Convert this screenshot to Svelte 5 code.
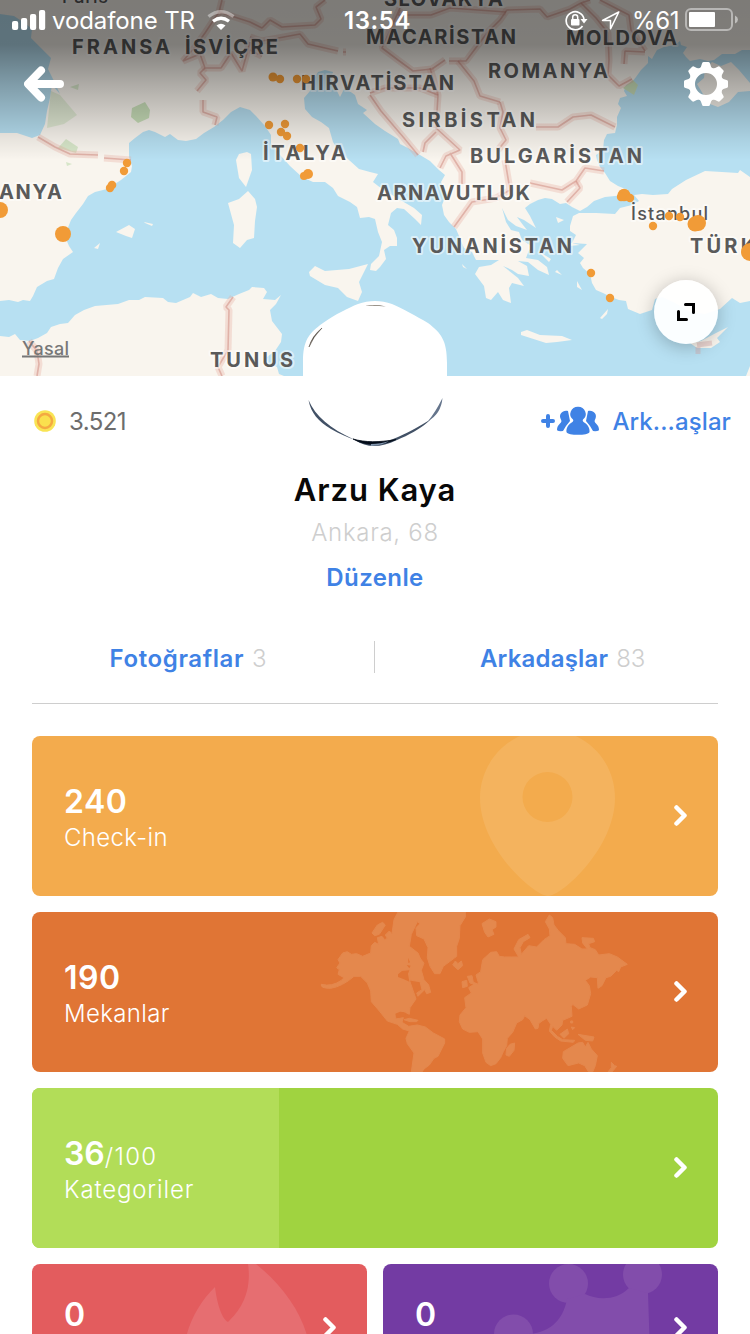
<script>
  const labels = [
    { t: 'Paris', x: 62, y: 3, w: 46, s: 18, k: 'city' },
    { t: 'SLOVAKYA', x: 384, y: 6, w: 119 },
    { t: 'FRANSA', x: 72, y: 54, w: 98 },
    { t: 'İSVİÇRE', x: 185, y: 54, w: 93 },
    { t: 'MACARİSTAN', x: 366, y: 44, w: 150 },
    { t: 'MOLDOVA', x: 566, y: 45, w: 111 },
    { t: 'ROMANYA', x: 488, y: 78, w: 120 },
    { t: 'HIRVATİSTAN', x: 301, y: 90, w: 153 },
    { t: 'SIRBİSTAN', x: 402, y: 127, w: 133 },
    { t: 'İTALYA', x: 263, y: 160, w: 83 },
    { t: 'BULGARİSTAN', x: 470, y: 163, w: 172 },
    { t: 'ANYA', x: -1, y: 199, w: 63 },
    { t: 'ARNAVUTLUK', x: 377, y: 200, w: 153 },
    { t: 'YUNANİSTAN', x: 412, y: 253, w: 160 },
    { t: 'TÜRKİYE', x: 690, y: 253, w: 107 },
    { t: 'TUNUS', x: 210, y: 367, w: 83 },
    { t: 'İstanbul', x: 631, y: 220, w: 77, s: 18, k: 'city' }
  ];
  const dots = [
    [273, 77, 4.5], [280, 79, 4.2], [297, 79, 4.2], [306, 79, 4.2], [269, 125, 4.2], [285, 124, 4.2],
    [281, 132, 4.2], [287, 136, 4.2], [300, 148, 4.2], [308, 174, 5], [304, 176, 4], [127, 163, 4.2],
    [124, 171, 4.2], [112, 185, 4.3], [110, 188, 4.2], [0, 210, 8], [63, 234, 8], [624, 195, 6.3],
    [621, 197, 4.2], [630, 198, 4.2], [669, 216, 4.2], [680, 217, 4.2], [653, 226, 4.2], [698, 223, 8],
    [695, 224, 7.5], [591, 273, 4.2], [610, 298, 4.2], [750, 252, 9]
  ];
  const borders = [
    'M38 137L55 147 70 154 98 155M104 158L131 160',
    'M222 0L219 12 205 33 195 47 183 61 200 54 205 68 221 68 231 53 242 71 250 42',
    'M219 12L250 22 262 28 270 20 282 27 315 25 321 19 316 7 325 0',
    'M205 68L200 73 206 80 197 91M203 100V112L217 117 215 125',
    'M250 37L262 41 300 34 308 44 338 51M343 52H346M262 56L250 50',
    'M400 10L398 15 431 15 450 8 506 12M400 8L382 48 398 60 413 71 432 69 445 60',
    'M449 61H466L487 33 500 20 507 10 540 9 547 17 570 9 581 3 590 0',
    'M581 3L596 18 608 33 609 60 608 75 619 86 632 79M600 0L629 15 631 30 645 51M624 64L625 51 645 52',
    'M458 61L474 81 480 96 500 102M430 68L438 95 436 128',
    'M500 102L503 112 500 128 506 140 498 150',
    'M370 95L381 111 404 138 418 155M370 93L385 88 420 88 438 95',
    'M436 128L460 150 446 156 440 168M436 132L425 143 423 152M450 153L462 172V184',
    'M536 127H558L573 117 591 115 615 127M604 171L585 168 576 181 562 190 530 183',
    'M505 160L510 190 496 198 472 202 454 227M576 181L580 188 567 202',
    'M233 297L226 307 229 310 228 350 218 367 222 376',
    'M29 341L37 351 39 364 37 376'
  ];
  const stats = [
    { n: '240', label: 'Check-in', k: 'checkin' },
    { n: '190', label: 'Mekanlar', k: 'places' },
    { n: '36', of: '/100', label: 'Kategoriler', k: 'categories' }
  ];
</script>

<main>
  <header class="map">
    <svg class="geo" viewBox="0 0 750 376" width="750" height="376">
      <defs>
        <linearGradient id="shade" x1="0" y1="0" x2="0" y2="1">
          <stop offset="0" stop-color="#000" stop-opacity=".5" />
          <stop offset=".28" stop-color="#000" stop-opacity=".49" />
          <stop offset=".53" stop-color="#000" stop-opacity=".3" />
          <stop offset=".87" stop-color="#000" stop-opacity=".07" />
          <stop offset="1" stop-color="#000" stop-opacity="0" />
        </linearGradient>
      </defs>
      <rect width="750" height="376" fill="#b7e0f2" />
      <g fill="#f9f5ee">
        <path d="M0 0H750V50L742 50 735 54 722 54 714 60 708 61 700 59 690 61 686 57 683 53 687 47 681 45 680 41 675 45 664 47 657 50 653 57 652 59 648 56 648 63 641 70 636 77 632 82 626 85 624 91 627 96 620 98 618 104 621 108 617 117 617 125 615 133 607 134 604 140 603 150 596 155 597 160 600 167 605 173 610 181 618 186 628 190 623 195 615 196 605 197 594 201 587 207 580 211 572 207 566 203 560 204 552 199 545 198 538 200 530 204 525 208 530 216 536 228 530 224 524 220 517 217 523 225 527 230 516 226 508 220 502 208 506 222 511 230 519 232 522 240 533 247 529 250 526 258 538 260 547 267 549 275 538 270 528 262 518 261 527 266 529 276 518 274 512 270 503 266 518 278 524 286 512 283 509 288 511 303 503 300 498 292 491 300 486 298 484 286 475 274 479 267 491 265 499 260 476 260 472 252 464 248 459 236 456 229 449 222 444 215 442 205 446 195 441 182 445 175 439 170 430 161 420 155 408 148 400 144 398 139 385 131 375 124 363 113 367 110 358 104 355 95 348 90 345 87 340 97 337 91 331 79 333 72 325 70 318 72 313 80 310 91 304 98 305 109 312 117 321 122 329 128 333 142 338 150 349 160 359 169 370 172 378 174 373 182 382 189 402 201 414 208 422 215 421 225 415 219 404 209 397 208 391 213 388 225 394 230 397 238 397 246 390 246 384 250 386 259 380 267 376 271 370 270 371 264 379 256 382 242 378 232 375 219 369 217 360 218 357 207 350 202 338 196 333 188 325 182 313 182 302 177 290 166 281 156 271 144 271 135 265 126 256 116 250 110 240 107 231 112 223 120 214 127 204 133 196 139 186 141 178 140 170 134 165 137 155 132 149 130 143 132 135 138 129 143 129 157 132 166 131 172 121 180 107 189 95 192 88 196 83 204 76 213 71 220 67 230 66 239 69 246 73 252 63 259 58 268 54 279 47 281 37 287 33 296 30 301 23 300 18 302 9 300 0 301Z" />
        <path d="M0 336L9 337 15 334 20 340 30 341 38 338 47 333 51 327 60 324 68 323 75 315 84 310 95 306 118 304 129 300 139 300 145 297 163 298 168 302 176 303 190 297 193 293 201 297 211 294 218 298 228 299 239 294 249 290 252 287 264 288 267 292 263 299 275 300 281 295 276 304 270 310 272 321 282 334 281 342 275 351 267 357 268 363 277 367 279 374 284 376H0Z" />
        <path d="M570 226L573 216 579 213 596 213 615 214 620 208 632 205 639 201 634 195 642 194 653 195 668 194 672 189 686 180 705 171 722 172 738 173 740 170 750 177V301L740 303 732 298 720 309 705 314 690 312 675 303 662 297 655 299 652 310 640 314 628 309 626 301 619 300 611 297 603 293 596 290 592 283 590 274 583 268 580 263 584 258 578 253 587 244 572 243 576 235 570 231Z" />
        <path d="M712 62L721 66 731 62 739 70 750 83V91L738 92 729 102 718 107 710 104 703 94 697 84 704 78 705 69Z" />
        <path d="M228 203L239 199 248 191 255 199 257 207 255 221 254 238 247 240 240 248 233 243 234 225 231 214Z" />
        <path d="M236 160L239 154 247 152 251 154 252 170 246 187 239 178Z" />
        <path d="M309 272L315 266 325 271 337 270 349 269 368 264 359 282 362 292 358 301 347 297 338 288 325 285 310 276Z" />
        <path d="M116 232L129 225 135 229 132 238 126 236ZM144 222L153 224 152 226 145 223ZM94 248L100 243 98 249Z" />
        <path d="M521 332L527 330 540 335 562 336 572 340 557 342 546 343 521 335Z" />
        <path d="M690 343L701 341 716 333 728 327 717 338 720 342 711 348 697 348ZM600 318L608 309 607 314 602 319ZM538 251L551 259 549 262ZM556 217L564 220 558 223ZM568 242L580 245 569 246ZM557 270L562 275 555 272ZM577 281L582 290 577 287ZM462 264L467 269 463 267ZM467 276L470 275ZM750 366V376H746Z" />
      </g>
      <path d="M0 14L14 16 26 24 32 29 31 38 41 48 51 58 48 69 53 79 60 94 52 85 50 98 47 111 45 124 40 135 32 138 17 133 0 133Z" fill="#b7e0f2" />
      <g fill="#c9dfb9">
        <path d="M51 91L60 95 77 115 64 124 47 128Z" opacity=".5" />
        <path d="M132 108L145 102 150 110 149 118 138 123 131 117Z" />
        <path d="M58 148L66 139 78 147 76 153ZM66 162L72 164 67 166ZM70 87L79 84 78 90Z" opacity=".7" />
        <path d="M623 88L633 80 638 85 634 95Z" />
      </g>
      <path d="M697 345L712 343M698 347V354" stroke="#d4a5a5" stroke-opacity=".4" stroke-width="5" />
      <g fill="none" stroke-linejoin="bevel">
        {#each borders as d}
          <path {d} stroke="#e7aaa0" stroke-opacity=".32" stroke-width="7" />
          <path {d} stroke="#cf8e84" stroke-opacity=".55" stroke-width="1.6" />
        {/each}
      </g>
      {#each labels as l}
        <text class={l.k ?? 'country'} x={l.x} y={l.y} font-size={l.s ?? 20} textLength={l.w}>{l.t}</text>
      {/each}
      {#each dots as [x, y, r]}
        <circle cx={x} cy={y} r={r} fill="#f19b37" />
      {/each}
      <rect width="750" height="160" fill="url(#shade)" />
      <text class="legal" x="22" y="355" font-size="18" textLength="47">Yasal</text>
      <path d="M22 356.500H69" stroke="#777" stroke-width="2" />
    </svg>

    <div class="bar">
      <svg width="34" height="20" viewBox="0 0 34 20" fill="#fff">
        <rect y="11" width="6.200" height="9" rx="2" /><rect x="9" y="8" width="6.200" height="12" rx="2" />
        <rect x="18" y="4" width="6.200" height="16" rx="2" /><rect x="27" width="6.200" height="20" rx="2" />
      </svg>
      <span class="carrier">vodafone TR</span>
      <svg class="wifi" width="28" height="20" viewBox="0 0 28 20" fill="none" stroke="#fff" stroke-width="3.300">
        <path d="M1.500 6.500Q14 -3 26.500 6.500" opacity=".4" />
        <path d="M6 11.300Q14 5.200 22 11.300" />
        <path d="M9.500 15.500Q14 12 18.500 15.500L14 20Z" fill="#fff" stroke="none" />
      </svg>
      <span class="time">13:54</span>
      <svg class="lock" width="23" height="21" viewBox="0 0 23 21">
        <path d="M17.500 16A9 9 0 1 1 19 9" fill="none" stroke="#fff" stroke-width="1.700" />
        <path d="M15.500 9H22.500L19 13.500Z" fill="#fff" /><rect x="6" y="9" width="8.500" height="6.500" rx="1" fill="#fff" />
        <path d="M7.700 10V7.200a2.500 2.500 0 0 1 5 0V10" fill="none" stroke="#fff" stroke-width="1.500" />
      </svg>
      <svg class="loc" width="19" height="19" viewBox="0 0 19 19"><path d="M17.800 1L1.500 9.500H9.500V17.800Z" fill="none" stroke="#fff" stroke-width="1.500" stroke-linejoin="round" /></svg>
      <span class="percent">%61</span>
      <svg class="battery" width="53" height="24" viewBox="0 0 53 24">
        <rect x="1" y="1" width="46" height="21" rx="5" fill="none" stroke="#fff" stroke-opacity=".45" stroke-width="2" />
        <rect x="4" y="4" width="26" height="15" rx="1" fill="#fff" /><path d="M50 7.500Q53 9 53 11.500T50 15.500Z" fill="#fff" opacity=".5" />
      </svg>
    </div>

    <nav>
      <svg width="40" height="36" viewBox="0 0 40 36" fill="none" stroke="#fff" stroke-width="8" stroke-linecap="round" stroke-linejoin="round"><path d="M17 4.500L4 18 17 31.500M6 18H36" /></svg>
      <svg width="44" height="44" viewBox="-22 -22 44 44">
        <g fill="#fff">
          {#each [0, 45, 90, 135, 180, 225, 270, 315] as a}
            <path transform="rotate({a})" d="M-7 -15Q-4.500 -17 -4 -20.500Q-3.800 -22 -2.500 -22H2.500Q3.800 -22 4 -20.500Q4.500 -17 7 -15Z" />
          {/each}
        </g>
        <circle r="14" fill="none" stroke="#fff" stroke-width="6" />
      </svg>
    </nav>

    <div class="expand">
      <svg width="18" height="18" viewBox="0 0 18 18" fill="none" stroke="#000" stroke-width="3" stroke-linecap="round"><path d="M8.500 1.500H16.500V9.500" /><path d="M1.500 8.500V16.500H9.500" /></svg>
    </div>
    <svg class="avatar" width="146" height="150" viewBox="302 299 146 150">
      <path d="M303 376V362C303 340 309 333 323 323C336 314 348 308 358 304C369 300 381 300 392 304C402 308 416 316 428 323C441 333 447 340 447 363V394C447 412 440 419 424 429L397 441C382 449 368 449 353 441L325 429C309 419 303 412 303 394Z" fill="#fff" />
      <path d="M365 306Q375 304 386 306.500Q375 305.300 365 306Z" fill="#837b70" />
      <path d="M309 347Q312 336 322 328Q313 337 309 347Z" fill="#4b4238" stroke="#4b4238" stroke-width=".5" />
      <path d="M308.500 400C311 413 318 421 331 429C340 434 347 437 355 440C367 448 380 448 397 440C421 430 438 418 442.500 398C440 408 436 416 428 421C413 430 402 436 388 441C376 443 365 443 353 439C331 429 315 416 308.500 400Z" fill="#425166" />
      <path d="M353 439C366 446 380 446 396 439.500C379 442.500 365 442.500 353 439Z" fill="#030b18" stroke="#030b18" stroke-width=".8" />
      <path d="M371 446Q384 445 389 441Q381 444 371 444Z" fill="#8195ad" />
      <path d="M428 421Q441 414 442.500 398Q435 413 428 421Z" fill="#65758c" />
    </svg>
  </header>

  <section class="profile">
    <div class="coins">
      <svg width="22" height="22" viewBox="0 0 22 22"><circle cx="11" cy="11" r="10.800" fill="#f9e454" /><circle cx="11" cy="11" r="7" fill="#fae04e" stroke="#f4a942" stroke-width="2.500" /></svg>
      <span>3.521</span>
    </div>
    <div class="add">
      <svg width="60" height="30" viewBox="0 0 60 30" fill="#3f82e5">
        <path d="M3 15H13M8 10V20" stroke="#3f82e5" stroke-width="4" stroke-linecap="round" />
        <path d="M28 5C23 3.500 18.500 8 20.500 12.500C22 15 21.500 16 20 17.500C17.500 20 17 21.500 17 24.300Q19 25.500 23 25L26 20 30 15Z" />
        <path d="M48 5C53 3.500 57.500 8 55.500 12.500C54 15 54.500 16 56 17.500C58.500 20 59 21.500 59 24.300Q57 25.500 53 25L50 20 46 15Z" />
        <path d="M38 .8A7.600 7.200 0 0 1 43 13.500C42 15 43.500 16 45 17C48 19 50 22.500 49.500 26C48.500 29.800 27.500 29.800 26.500 26C26 22.500 28 19 31 17C32.500 16 34 15 33 13.500A7.600 7.200 0 0 1 38 .8Z" stroke="#fff" stroke-width="1.800" paint-order="stroke" />
      </svg>
      <span>Ark...aşlar</span>
    </div>
    <h1>Arzu Kaya</h1>
    <p class="city-line">Ankara, 68</p>
    <a class="edit">Düzenle</a>
    <div class="tabs">
      <div><b class="photos">Fotoğraflar</b><span>3</span></div>
      <i></i>
      <div><b>Arkadaşlar</b><span>83</span></div>
    </div>
  </section>

  <section class="cards">
    {#each stats as s}
      <article class="card {s.k}">
        {#if s.k === 'checkin'}
          <svg class="art" viewBox="0 0 686 160"><path fill="#f4b35e" fill-rule="evenodd" d="M516 160C502 160 448 112 448 62C448 25 478-6 516-6S583 25 583 62C583 112 530 160 516 160ZM515.500 36a25 25 0 1 0 0 50 25 25 0 0 0 0-50Z" /></svg>
        {:else if s.k === 'places'}
          <svg class="art" viewBox="0 0 686 160">
            <g transform="translate(278 -7) scale(.33333)" fill="#e4884d" stroke="#e4884d" stroke-width="3" stroke-linejoin="round">
              <path d="M34 238Q66 246 94 226L102 218 84 208 88 194 80 188 90 174 84 164 98 144 112 140 124 148 140 146 158 154 182 144 184 122 194 112 206 118 202 98 216 94 224 104 232 100 226 90 238 78 246 86 252 44 264 21 466 21 466 36 450 62 448 100 440 124 440 154 400 184 390 206 374 206 360 184 352 158 354 128 342 102 320 92 318 68 330 56 322 50 304 88 298 124 324 144 332 162 342 174 334 196 342 224 356 240 362 262 350 266 344 254 324 274 320 264 336 254 330 230 304 226 290 222 270 214 268 200 298 194 300 230 318 282 300 308 298 328 286 322 260 326 256 342 280 338 276 352 296 364 322 360 346 366 370 384 404 402 404 414 392 438 384 454 372 460 358 480 342 492 336 501 304 501 312 444 292 416 288 400 298 378 278 372 262 358 232 348 208 318 184 290 182 258 172 234 152 214 132 214Q98 244 62 250Q30 250 34 238ZM186 84L202 60 218 52 226 60 208 88 194 92ZM282 344L298 340 324 346 320 350 300 350Z" />
              <path fill="#e07535" stroke="none" d="M264 208L276 198 298 196 294 206 298 230 280 222 264 216ZM256 326L270 320 284 322 286 332 268 338 258 336ZM290 180L302 182 298 190ZM294 158L300 172 295 174Z" />
              <path d="M428 180L436 168 444 176 454 168 458 182 444 194ZM516 56L538 42 558 50 558 66 546 74 552 88 534 96 524 82ZM456 230L470 226 472 244 458 248ZM472 214L486 212 490 232 506 238 504 230 498 210 512 200 518 164 542 142 560 140 568 154 584 156 606 156 626 156 612 132 626 104 654 88 660 98 640 110 630 128 634 148 656 122 680 126 702 104 720 92 718 72 706 50 718 30 728 38 732 60 746 78 766 98 768 116 794 118 816 132 832 132 818 114 816 98 850 100 854 110 836 116 840 128 856 134 866 150 898 146 922 156 952 178 932 186 926 200 920 196 902 214 888 218 876 242 864 250 862 218 842 216 826 226 838 242 842 266 832 300 806 312 788 298 784 304 786 334 758 346 756 360 740 376 728 364 724 376 742 394 758 404 794 406 790 412 752 408 734 396 718 378 722 358 710 340 696 348 686 356 684 370 676 372 660 344 644 332 638 344 620 354 608 382 592 400 590 422 580 440 572 458 558 476 542 482 528 472 518 444 518 402 504 380 478 382 458 372 448 350 450 330 468 308 464 278 484 264 476 248 492 238 480 234ZM590 430L600 418 614 414 612 436 598 454 588 450ZM750 388L772 372 776 386 762 400ZM782 348L788 348 788 354 782 354ZM784 366L794 368 788 374ZM804 388L852 396 848 408 826 406ZM760 440L804 414 818 412 826 426 834 412 844 432 862 452 856 482 848 501H836L824 482 806 474 774 482 758 460ZM904 472L914 482 920 484 906 501H894L904 488Z" />
            </g>
          </svg>
        {:else}
          <div class="progress" style="width:36%"></div>
        {/if}
        <div class="copy"><strong>{s.n}<em>{s.of ?? ''}</em></strong><span>{s.label}</span></div>
        <svg class="chevron" width="13" height="21" viewBox="0 0 13 21"><path d="M2.500 2.500L10.500 10.500 2.500 18.500" /></svg>
      </article>
    {/each}
    <div class="pair">
      <article class="card streak">
        <svg class="art" viewBox="0 0 335 160"><path fill="#e66e71" d="M152 90C152 66 166 39 183 23C185 40 190 55 196 58C209 46 220 28 216 0H224C250 21 269 47 276 75C284 125 255 160 216 160S150 130 152 90Z" /></svg>
        <div class="copy"><strong>0</strong></div>
        <svg class="chevron" width="13" height="21" viewBox="0 0 13 21"><path d="M2.500 2.500L10.500 10.500 2.500 18.500" /></svg>
      </article>
      <article class="card crown">
        <svg class="art" viewBox="0 0 335 160"><g fill="#824dab"><circle cx="185.500" cy="19.500" r="19.500" /><circle cx="259.500" cy="10.500" r="19.500" /><circle cx="130.500" cy="70" r="19.500" /><path d="M143 70C164 70 180 58 184 35L202 30C214 36 233 37 246 24L265 29 269 150H150L120 90Z" /></g></svg>
        <div class="copy"><strong>0</strong></div>
        <svg class="chevron" width="13" height="21" viewBox="0 0 13 21"><path d="M2.500 2.500L10.500 10.500 2.500 18.500" /></svg>
      </article>
    </div>
  </section>
</main>

<style>
  :global(body) { margin: 0; background: #fff; }
  main { width: 750px; height: 1334px; overflow: hidden; background: #fff; font-family: Inter, "Noto Sans", sans-serif; }
  svg { display: block; flex: none; }
  .map { position: relative; height: 376px; }
  .geo { position: absolute; inset: 0; }
  .geo text { stroke: #fff; stroke-opacity: .5; stroke-width: 4px; paint-order: stroke; stroke-linejoin: round; }
  .country { font-weight: 700; fill: #5a5a5a; }
  .city { font-weight: 500; fill: #555; }
  .geo .legal { fill: #777; font-weight: 500; stroke: none; }
  .bar { position: relative; display: flex; align-items: center; height: 40px; padding-left: 12px; color: #fff; font-size: 24px; white-space: nowrap; }
  .carrier { width: 142px; margin-left: 6px; letter-spacing: -.1px; }
  .wifi { margin-left: 13px; }
  .time { width: 68px; margin-left: 109px; font-weight: 600; letter-spacing: .6px; }
  .lock { margin-left: 153px; }
  .loc { margin-left: 13px; }
  .percent { width: 47px; margin-left: 12px; letter-spacing: -.4px; }
  .battery { margin-left: 6px; }
  nav { position: relative; display: flex; justify-content: space-between; align-items: center; height: 44px; margin-top: 22px; padding: 0 22px 0 24px; }
  .expand { position: absolute; left: 654px; top: 280px; width: 64px; height: 64px; border-radius: 50%; background: rgba(255,255,255,.94); display: grid; place-items: center; box-shadow: 0 3px 18px rgba(0,0,0,.25); }
  .avatar { position: absolute; left: 302px; top: 299px; z-index: 2; }
  .profile { display: grid; grid-template-columns: 1fr auto; padding: 26px 32px 0; }
  .coins, .add { display: flex; align-items: center; height: 38px; font-size: 24px; }
  .coins { gap: 13px; padding-left: 2px; color: #6d6d6d; letter-spacing: -.6px; }
  .add { gap: 12px; margin-right: -13px; color: #3f82e5; font-weight: 500; letter-spacing: .1px; }
  .add svg { margin-top: -1px; }
  h1 { grid-column: 1 / 3; margin: 30px 0 0; text-align: center; font-size: 31px; line-height: 40px; font-weight: 600; letter-spacing: .95px; color: #080808; }
  .city-line { grid-column: 1 / 3; margin: 8px 0 0; text-align: center; font-size: 24px; line-height: 30px; color: #cecece; letter-spacing: .7px; font-weight: 300; }
  .edit { grid-column: 1 / 3; margin-top: 15px; text-align: center; font-size: 24px; line-height: 30px; font-weight: 600; color: #3f82e5; letter-spacing: .4px; }
  .tabs { grid-column: 1 / 3; display: grid; grid-template-columns: 342px 1px 343px; height: 62px; margin-top: 48px; border-bottom: 1px solid #cecece; align-items: start; }
  .tabs div { display: flex; justify-content: center; gap: 8px; line-height: 36px; font-size: 24px; }
  .tabs div:first-child { padding-right: 30px; }
  .tabs div:last-child { padding-left: 32px; }
  .tabs b { color: #3f82e5; font-weight: 600; letter-spacing: .2px; }
  .tabs .photos { letter-spacing: .6px; }
  .tabs span { color: #cecece; font-weight: 300; letter-spacing: -.2px; }
  .tabs i { height: 32px; background: #cecece; }
  .cards { display: grid; gap: 16px; padding: 32px 32px 0; }
  .card { position: relative; display: flex; align-items: center; justify-content: space-between; height: 160px; box-sizing: border-box; padding: 0 31px 0 32px; overflow: hidden; border-radius: 8px; color: #fff; }
  .checkin { background: #f3ab4d; }
  .places { background: #e07535; }
  .categories { background: #a0d340; }
  .streak { background: #e35c5e; }
  .crown { background: #733ba3; }
  .pair { display: grid; grid-template-columns: 335px 335px; gap: 16px; height: 160px; }
  .art { position: absolute; inset: 0; width: 100%; height: 100%; }
  .progress { position: absolute; left: 0; top: 0; height: 100%; background: #b2dd58; }
  .copy { position: relative; display: grid; height: 68px; margin-top: 4px; align-content: start; }
  strong { font-size: 32px; line-height: 36px; font-weight: 600; letter-spacing: .5px; }
  em { font-style: normal; font-weight: 300; font-size: 24px; letter-spacing: 1.3px; }
  .copy span { margin-top: -1px; font-size: 24px; line-height: 32px; font-weight: 300; letter-spacing: .35px; }
  .categories .copy span { letter-spacing: .85px; }
  .categories strong { letter-spacing: 0; }
  .pair .copy { margin-top: -26px; }
  .chevron { position: relative; margin-top: -1px; fill: none; stroke: #fff; stroke-width: 4.500; stroke-linecap: round; stroke-linejoin: round; }
  .pair .chevron { margin-top: -33px; }
</style>
